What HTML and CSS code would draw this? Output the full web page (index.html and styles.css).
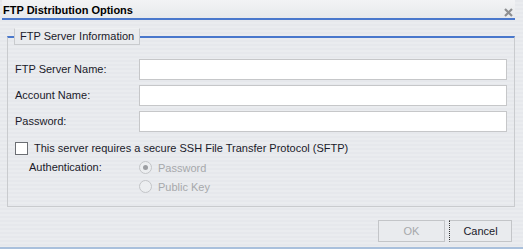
FILE: index.html
```html
<!DOCTYPE html>
<html lang="en">
<head>
    <meta charset="UTF-8">
    <title>FTP Distribution Options</title>
<link rel="stylesheet" href="styles.css">
</head>
<body>
    <div class="dialog">
        <div class="titlebar">
            <span class="title">FTP Distribution Options</span>
            <svg class="close" width="9" height="9" viewBox="0 0 9 9">
                <path d="M1 1 L8 8 M8 1 L1 8" stroke="#8e8f91" stroke-width="2.2"/>
            </svg>
        </div>
        <fieldset class="group">
            <legend>FTP Server Information</legend>
            <div class="row">
                <label>FTP Server Name:</label>
                <input type="text" class="field">
            </div>
            <div class="row">
                <label>Account Name:</label>
                <input type="text" class="field">
            </div>
            <div class="row">
                <label>Password:</label>
                <input type="password" class="field">
            </div>
            <div class="check-row">
                <span class="checkbox"></span>
                <span>This server requires a secure SSH File Transfer Protocol (SFTP)</span>
            </div>
            <div class="auth-row">
                <span class="auth-label">Authentication:</span>
                <div class="radios">
                    <div class="radio-item"><span class="radio checked"></span>Password</div>
                    <div class="radio-item"><span class="radio"></span>Public Key</div>
                </div>
            </div>
        </fieldset>
        <div class="buttons">
            <button class="btn disabled">OK</button>
            <button class="btn focused">Cancel</button>
        </div>
    </div>
</body>
</html>
```

FILE: styles.css
```css
body {
    margin: 0;
    font-family: "Liberation Sans", Arial, sans-serif;
    font-size: 11px;
    color: #1a1a2a;
}
.dialog {
    width: 523px;
    height: 249px;
    box-sizing: border-box;
    background: repeating-linear-gradient(to bottom, #e6e8ec 0px, #e6e8ec 2px, #eaecef 2px, #eaecef 4px);
    border-bottom: 2px solid #a9c0dc;
}
.titlebar {
    height: 18px;
    margin: 0 8px 0 2px;
    border-bottom: 2px solid #4a78cc;
    display: flex;
    align-items: center;
    justify-content: space-between;
    background: linear-gradient(to bottom, #f2f3f5, #e7e9ec);
}
.title {
    font-weight: bold;
    font-size: 11px;
    color: #000;
    padding-left: 1px;
    padding-top: 1px;
}
.close {
    margin-right: 2px;
    margin-top: 6px;
}
.group {
    margin: 8px 8px 0 7px;
    padding: 11px 7px 12px 7px;
    border: 1px solid #c9cbce;
    border-top: 2px solid #4a78cc;
    height: 179px;
    box-sizing: border-box;
}
.group legend {
    padding: 1px 5px 2px 5px;
    margin-left: -1px;
    border: 1px solid #c9cbce;
    border-top-color: #eef0f2;
    background: #e9ebee;
    color: #1a1a2a;
}
.row {
    display: flex;
    align-items: center;
    height: 26px;
}
.row label {
    width: 124px;
}
.field {
    width: 368px;
    height: 21px;
    box-sizing: border-box;
    border: 1px solid #c6c7c9;
    background: #fff;
    margin: 0;
    outline: none;
}
.check-row {
    display: flex;
    align-items: center;
    margin-top: 5px;
    height: 18px;
}
.checkbox {
    width: 11px;
    height: 11px;
    border: 1px solid #6b6e73;
    background: #fff;
    margin-right: 6px;
}
.auth-row {
    display: flex;
    margin-top: 1px;
}
.auth-label {
    width: 110px;
    margin-left: 14px;
    line-height: 19px;
}
.radios {
    display: flex;
    flex-direction: column;
}
.radio-item {
    display: flex;
    align-items: center;
    height: 19px;
    color: #a6a8ab;
}
.radio {
    width: 11px;
    height: 11px;
    border: 1px solid #c3c5c8;
    border-radius: 50%;
    background: #eceef0;
    margin-right: 6px;
    position: relative;
}
.radio.checked::after {
    content: "";
    position: absolute;
    left: 3px;
    top: 3px;
    width: 5px;
    height: 5px;
    border-radius: 50%;
    background: #9c9ea2;
}
.buttons {
    display: flex;
    justify-content: flex-end;
    gap: 4px;
    margin: 13px 11px 0 0;
}
.btn {
    height: 22px;
    font-family: "Liberation Sans", Arial, sans-serif;
    font-size: 11px;
    background: #e9ebee;
    border: 1px solid #c3c5c8;
    margin: 0;
}
.btn.disabled {
    width: 67px;
    color: #a6a8ab;
}
.btn.focused {
    width: 63px;
    color: #1a1a2a;
    border-left: 1px dotted #333;
}
```
